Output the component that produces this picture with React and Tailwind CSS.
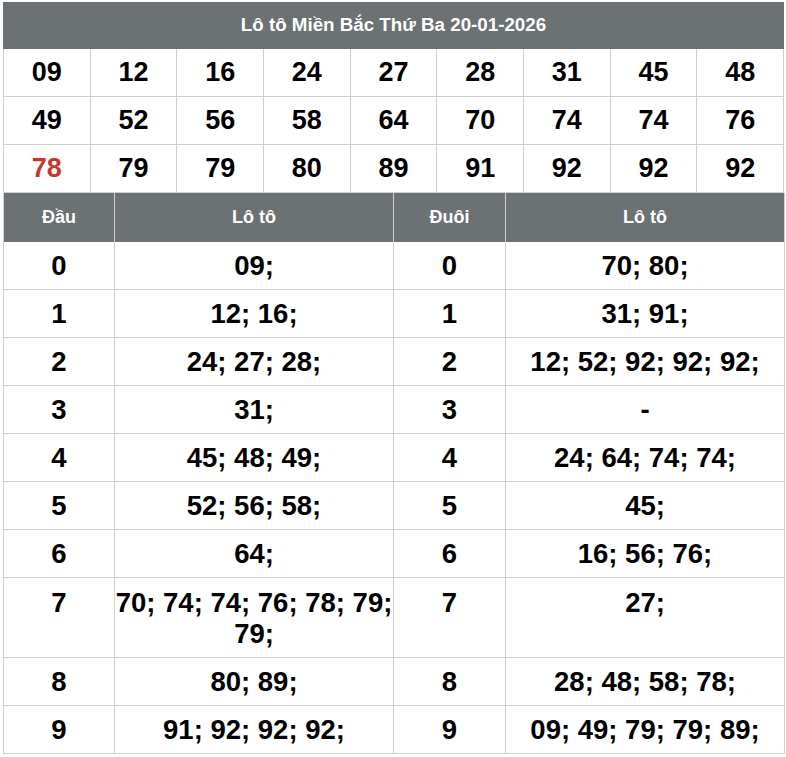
import React from 'react';

const lotoNumbers = [
  '09', '12', '16', '24', '27', '28', '31', '45', '48',
  '49', '52', '56', '58', '64', '70', '74', '74', '76',
  '78', '79', '79', '80', '89', '91', '92', '92', '92',
];

const rows = [
  { dau: '0', dauList: '09;', duoi: '0', duoiList: '70; 80;' },
  { dau: '1', dauList: '12; 16;', duoi: '1', duoiList: '31; 91;' },
  { dau: '2', dauList: '24; 27; 28;', duoi: '2', duoiList: '12; 52; 92; 92; 92;' },
  { dau: '3', dauList: '31;', duoi: '3', duoiList: '-' },
  { dau: '4', dauList: '45; 48; 49;', duoi: '4', duoiList: '24; 64; 74; 74;' },
  { dau: '5', dauList: '52; 56; 58;', duoi: '5', duoiList: '45;' },
  { dau: '6', dauList: '64;', duoi: '6', duoiList: '16; 56; 76;' },
  { dau: '7', dauList: '70; 74; 74; 76; 78; 79; 79;', duoi: '7', duoiList: '27;', tall: true },
  { dau: '8', dauList: '80; 89;', duoi: '8', duoiList: '28; 48; 58; 78;' },
  { dau: '9', dauList: '91; 92; 92; 92;', duoi: '9', duoiList: '09; 49; 79; 79; 89;' },
];

const cell = 'border-r border-b border-[#cfcfcf] flex items-center justify-center text-center';

export default function App() {
  return (
    <div className="w-[786px] min-h-[757px] bg-white pt-[2px] pl-[3px] font-[family-name:Liberation_Sans,Arial,sans-serif] font-bold text-black">
      <div className="w-[781px]">
        {/* Lô tô grid */}
        <div className="h-[47px] bg-[#6c7173] text-white text-[18.75px] flex items-center justify-center">
          Lô tô Miền Bắc Thứ Ba 20-01-2026
        </div>
        <div className="grid grid-cols-9 border-l border-[#cfcfcf] text-[27px]">
          {lotoNumbers.map((n, i) => (
            <div key={i} className={`${cell} h-[48px] ${i === 18 ? 'text-[#c4392d]' : ''}`}>
              {n}
            </div>
          ))}
        </div>

        {/* Đầu / Đuôi table */}
        <div className="grid grid-cols-[111px_279px_112px_279px] border-l border-[#cfcfcf] text-[27.5px] leading-[31px]">
          {['Đầu', 'Lô tô', 'Đuôi', 'Lô tô'].map((h, i) => (
            <div key={i} className={`${cell} h-[49px] bg-[#6c7173] text-white text-[18px] border-b-0`}>
              {h}
            </div>
          ))}
          {rows.map((r) => {
            const h = r.tall ? 'h-[80px] items-start pt-[9px]' : 'h-[48px]';
            return (
              <React.Fragment key={r.dau}>
                <div className={`${cell} ${h}`}>{r.dau}</div>
                <div className={`${cell} ${h}`}>{r.dauList}</div>
                <div className={`${cell} ${h}`}>{r.duoi}</div>
                <div className={`${cell} ${h}`}>{r.duoiList}</div>
              </React.Fragment>
            );
          })}
        </div>
      </div>
    </div>
  );
}
